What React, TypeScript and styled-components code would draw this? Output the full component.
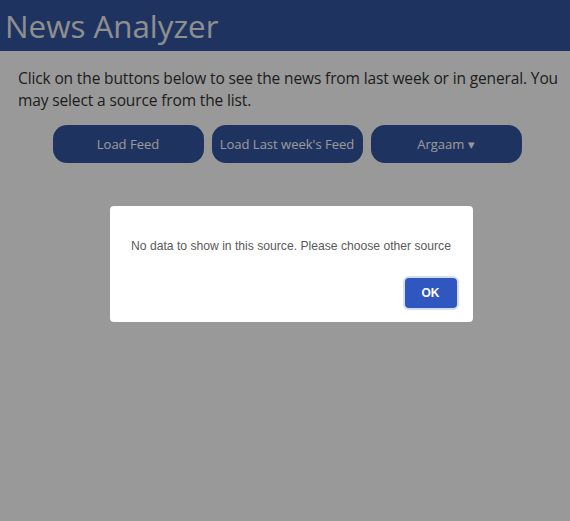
import React from "react";
import styled, { createGlobalStyle } from "styled-components";

const Global = createGlobalStyle`
  html, body { margin: 0; padding: 0; background: #fff; }
  body { font-family: "Open Sans", sans-serif; }
`;

const Page = styled.div`
  min-height: 521px;
`;

const Header = styled.header`
  background: #33559f;
  height: 51px;
  display: flex;
  align-items: center;
  padding: 0 5px;
`;

const Title = styled.h1`
  margin: 0;
  font-family: "Open Sans", sans-serif;
  font-weight: 400;
  font-size: 31.3px;
  color: #eee;
`;

const Intro = styled.p`
  margin: 16px 8px 0 18px;
  font-size: 15.5px;
  letter-spacing: -0.13px;
  line-height: 22px;
  color: #333;
`;

const ButtonRow = styled.div`
  display: flex;
  justify-content: center;
  gap: 8px;
  margin-top: 14px;
  padding-left: 4px;
`;

const FeedButton = styled.button`
  width: 151px;
  height: 38px;
  border: none;
  border-radius: 14px;
  background: #33559f;
  color: #fff;
  font-family: "Open Sans", sans-serif;
  font-size: 13px;
  padding: 0;
`;

const Overlay = styled.div`
  position: fixed;
  inset: 0;
  background: rgba(0, 0, 0, 0.4);
  display: flex;
  justify-content: center;
  align-items: flex-start;
  padding: 206px 0 0 12px;
`;

const Modal = styled.div`
  width: 363px;
  height: 116px;
  box-sizing: border-box;
  background: #fff;
  border-radius: 4px;
  display: flex;
  flex-direction: column;
  padding: 33px 12px 14px;
`;

const Message = styled.div`
  font-family: "Liberation Sans", Arial, sans-serif;
  font-size: 12.15px;
  color: #5a5a5a;
  text-align: center;
`;

const Actions = styled.div`
  display: flex;
  justify-content: flex-end;
  margin-top: auto;
  padding-right: 4px;
`;

const OkButton = styled.button`
  width: 52px;
  height: 30px;
  background: #3057c0;
  color: #fff;
  border: none;
  border-radius: 4px;
  box-shadow: 0 0 0 2px #d3def3;
  font-family: "Liberation Sans", Arial, sans-serif;
  font-weight: 700;
  font-size: 12px;
  padding: 0;
`;

export default function App() {
  return (
    <>
      <Global />
      <Page>
        <Header>
          <Title>News Analyzer</Title>
        </Header>
        <Intro>
          Click on the buttons below to see the news from last week or in general. You may select a source from the list.
        </Intro>
        <ButtonRow>
          <FeedButton>Load Feed</FeedButton>
          <FeedButton>Load Last week's Feed</FeedButton>
          <FeedButton>Argaam ▾</FeedButton>
        </ButtonRow>
      </Page>
      <Overlay>
        <Modal>
          <Message>No data to show in this source. Please choose other source</Message>
          <Actions>
            <OkButton>OK</OkButton>
          </Actions>
        </Modal>
      </Overlay>
    </>
  );
}
